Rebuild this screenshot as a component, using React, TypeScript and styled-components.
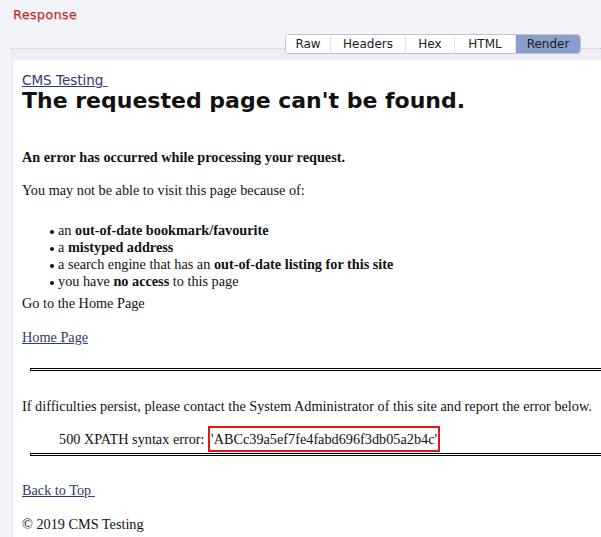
import React from "react";
import styled, { createGlobalStyle } from "styled-components";

const GlobalStyle = createGlobalStyle`
  html, body { margin: 0; padding: 0; background: #f4f3f9; }
  #root { width: 601px; height: 537px; }
`;

const Page = styled.div`
  width: 601px;
  height: 537px;
  overflow: hidden;
  background: #f4f3f9;
  display: flex;
  flex-direction: column;
`;

const Title = styled.h2`
  margin: 0;
  padding: 7px 0 0 13px;
  font: 400 13px/15px "DejaVu Sans", sans-serif;
  color: #c42a28;
  letter-spacing: 0.2px;
  text-shadow: 0.5px 0.5px 0 rgba(80, 0, 0, 0.25);
`;

const Panel = styled.section`
  flex: 1;
  min-height: 0;
  margin: 26px 0 0 11px;
  border-top: 1px dotted #c6c5d4;
  background: #eeedf6;
  padding-left: 2px;
  display: flex;
  flex-direction: column;
`;

const TabRow = styled.div`
  display: flex;
  justify-content: flex-end;
  margin: -15px 20px 0 0;
`;

const TabGroup = styled.div`
  display: flex;
  height: 20px;
  box-sizing: border-box;
  border: 1px solid #c3c3cd;
  border-radius: 4px;
  overflow: hidden;
  background: #fff;
`;

const Tab = styled.div<{ $w: number; $active?: boolean }>`
  width: ${(p) => p.$w}px;
  box-sizing: border-box;
  display: flex;
  align-items: center;
  justify-content: center;
  font: 400 12px/1 "DejaVu Sans", sans-serif;
  color: #1c1c1c;
  background: ${(p) => (p.$active ? "#8c9ecb" : "#fff")};
  & + & {
    border-left: 1px solid #e2e2e8;
  }
`;

const Frame = styled.div`
  flex: 1;
  margin-top: 6px;
  background: #fff;
  padding: 8px 0 0 9px;
  overflow: hidden;
  font-family: "Liberation Serif", "Times New Roman", serif;
  font-size: 14.25px;
  line-height: 17px;
  color: #111;
`;

const BrandLine = styled.div`
  margin-top: 4px;
  font: 400 13.5px/16px "DejaVu Sans", sans-serif;
`;

const Link = styled.a`
  color: #2f3a6d;
  text-decoration: underline;
`;

const Heading = styled.h1`
  margin: 0;
  font: 700 22px/26px "DejaVu Sans", sans-serif;
  color: #111;
`;

const Para = styled.p<{ $gap: number; $bold?: boolean; $indent?: number }>`
  margin: ${(p) => p.$gap}px 0 0;
  padding-left: ${(p) => p.$indent ?? 0}px;
  font-weight: ${(p) => (p.$bold ? 700 : 400)};
  white-space: nowrap;
`;

const List = styled.ul`
  margin: 23px 0 0;
  padding: 0 0 0 28px;
  list-style: none;
`;

const Item = styled.li`
  &::before {
    content: "";
    display: inline-block;
    width: 4px;
    height: 4px;
    border-radius: 50%;
    background: #111;
    margin-right: 4px;
    vertical-align: 1px;
  }
`;

const Rule = styled.div<{ $gap: number }>`
  margin: ${(p) => p.$gap}px -40px 0 8px;
  height: 1px;
  border: 1px solid #000;
  background: #fff;
`;

const ErrorCode = styled.span`
  border: 2px solid #dd1a1a;
  padding: 3px 1px;
`;

export default function App() {
  return (
    <>
      <GlobalStyle />
      <Page>
        <Title>Response</Title>
        <Panel>
          <TabRow>
            <TabGroup>
              <Tab $w={44}>Raw</Tab>
              <Tab $w={75}>Headers</Tab>
              <Tab $w={49}>Hex</Tab>
              <Tab $w={61}>HTML</Tab>
              <Tab $w={65} $active>
                Render
              </Tab>
            </TabGroup>
          </TabRow>
          <Frame>
            <BrandLine>
              <Link href="#">CMS Testing&nbsp;</Link>
            </BrandLine>
            <Heading>The requested page can't be found.</Heading>
            <Para $gap={35} $bold>
              An error has occurred while processing your request.
            </Para>
            <Para $gap={16}>You may not be able to visit this page because of:</Para>
            <List>
              <Item>
                an <b>out-of-date bookmark/favourite</b>
              </Item>
              <Item>
                a <b>mistyped address</b>
              </Item>
              <Item>
                a search engine that has an <b>out-of-date listing for this site</b>
              </Item>
              <Item>
                you have <b>no access</b> to this page
              </Item>
            </List>
            <Para $gap={5}>Go to the Home Page</Para>
            <Para $gap={17}>
              <Link href="#">Home Page</Link>
            </Para>
            <Rule $gap={22} />
            <Para $gap={27}>
              If difficulties persist, please contact the System Administrator of this site and report the error below.
            </Para>
            <Para $gap={16} $indent={37}>
              500 XPATH syntax error: <ErrorCode>'ABCc39a5ef7fe4fabd696f3db05a2b4c'</ErrorCode>
            </Para>
            <Rule $gap={5} />
            <Para $gap={26}>
              <Link href="#">Back to Top&nbsp;</Link>
            </Para>
            <Para $gap={17}>© 2019 CMS Testing</Para>
          </Frame>
        </Panel>
      </Page>
    </>
  );
}
